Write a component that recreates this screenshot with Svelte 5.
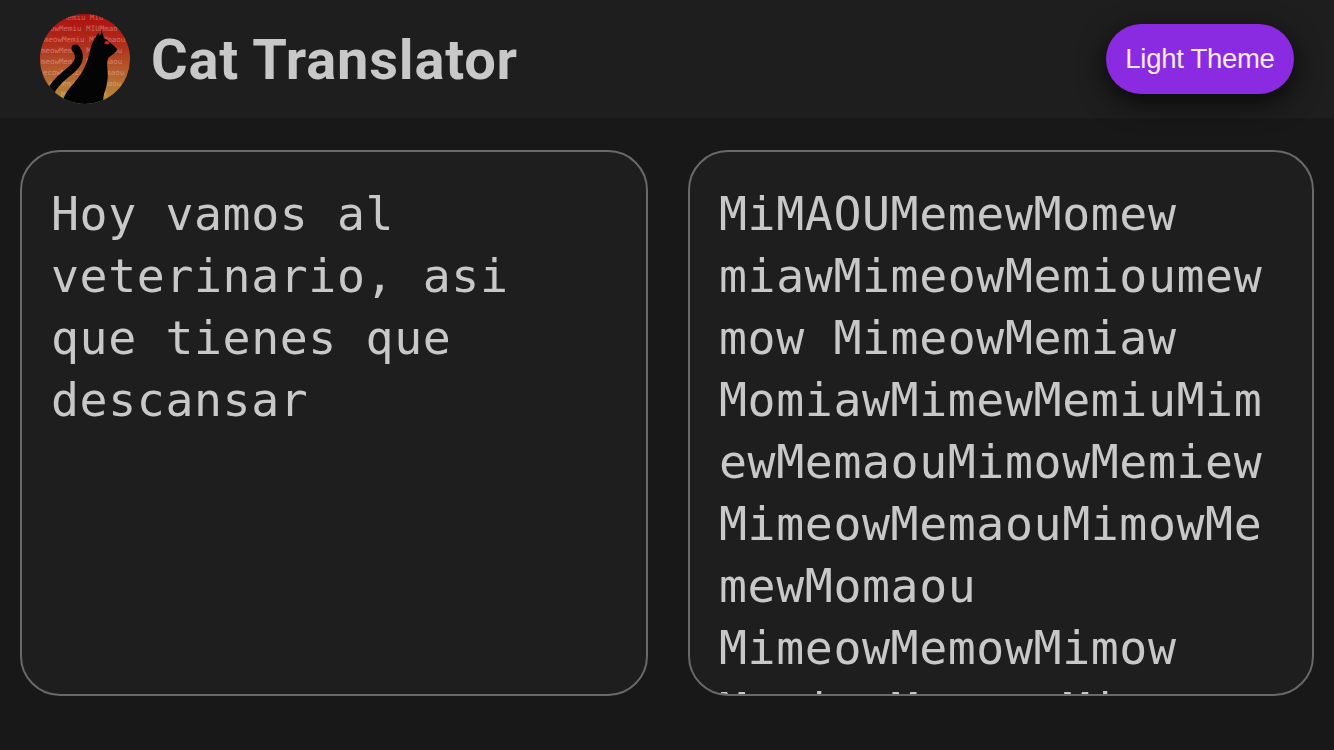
<script>
  let input = $state('Hoy vamos al veterinario, asi que tienes que descansar');
  const output = 'MiMAOUMemewMomew miawMimeowMemioumewmow MimeowMemiaw MomiawMimewMemiuMimewMemaouMimowMemiew MimeowMemaouMimowMemewMomaou MimeowMemowMimow MomiawMemaouMimow';
  const rows = [
    { x: 23, y: 6, t: 'Memiu MIU' },
    { x: 10, y: 17, t: 'owMemiu MIUMmao' },
    { x: 4, y: 28, t: 'meowMemiu MIUMmaou' },
    { x: 1, y: 39, t: 'meowMemiu MIUMmaou' },
    { x: 1, y: 50, t: 'meowMemiu MIUMmaou' },
    { x: 3, y: 61, t: 'ecowMemiu MIUMmaou' },
    { x: 9, y: 72, t: 'owMemiu MIUMmaou' },
    { x: 21, y: 83, t: 'Memiu MIUM' }
  ];
</script>

<div class="page">
  <header class="header">
    <div class="brand">
      <svg class="logo" viewBox="0 0 90 90" role="img" aria-label="Cat Translator logo">
        <defs>
          <linearGradient id="sunset" x1="0" y1="0" x2="0" y2="1">
            <stop offset="0" stop-color="#ae0f0f" />
            <stop offset="0.35" stop-color="#b02f1c" />
            <stop offset="0.65" stop-color="#b5602f" />
            <stop offset="1" stop-color="#b5933f" />
          </linearGradient>
          <clipPath id="disc"><circle cx="45" cy="45" r="45" /></clipPath>
        </defs>
        <g clip-path="url(#disc)">
          <rect width="90" height="90" fill="url(#sunset)" />
          {#each rows as row}
            <text x={row.x} y={row.y} class="logo-text">{row.t}</text>
          {/each}
          <path fill="#050404" d="M22 90 C23 84 26 78 30 73.7 C35 68 39 63 41.7 58.7 C45 53 47 48 48.3 43.7 C50 37 51 31 53.3 27 L58.3 18.7 L60 22 L61.7 16.3 L64 24 C68 26 72 30 77.3 35.3 C76 39 72 41 68.3 43.7 C67 47 67 50 67.3 53.7 C68 60 68 64 67.3 67 C66.5 74 64 79 63.3 83.7 L63 90 Z" />
          <path fill="none" stroke="#050404" stroke-width="8" stroke-linecap="butt" d="M10.5 78 C14 70 20 65 26 60 C31 56 37 52 38.5 46 C39.5 42 38.5 38 36 35" />
          <circle cx="35.5" cy="34.5" r="4" fill="#050404" />
          <ellipse cx="67" cy="28.7" rx="2.6" ry="1.7" fill="#e01a12" />
        </g>
      </svg>
      <h1 class="title">Cat Translator</h1>
    </div>
    <button class="theme" type="button">Light Theme</button>
  </header>
  <main class="panes">
    <div class="pane"><textarea class="field" bind:value={input} spellcheck="false"></textarea></div>
    <div class="pane"><textarea class="field" readonly value={output} spellcheck="false"></textarea></div>
  </main>
</div>

<style>
  :global(body) {
    margin: 0;
    background: #181818;
  }
  .page {
    height: 750px;
    display: flex;
    flex-direction: column;
    background: #181818;
    overflow: hidden;
  }
  .header {
    height: 119px;
    box-sizing: border-box;
    padding: 0 40px 1px;
    display: flex;
    align-items: center;
    justify-content: space-between;
    background: #1e1e1e;
    border-bottom: 1px solid #1a1a1a;
  }
  .brand {
    display: flex;
    align-items: center;
    gap: 21px;
  }
  .logo {
    width: 90px;
    height: 90px;
    display: block;
  }
  .logo-text {
    font-family: "DejaVu Sans Mono", monospace;
    font-size: 7.5px;
    fill: rgba(255, 215, 205, 0.42);
  }
  .title {
    margin: 3px 0 0;
    font-family: "Roboto", "Open Sans", sans-serif;
    font-size: 56px;
    font-weight: 700;
    letter-spacing: 0.8px;
    color: #c8c8c8;
    line-height: 1;
  }
  .theme {
    width: 188px;
    height: 70px;
    border: 0;
    border-radius: 35px;
    background: #8a2be2;
    color: #f4ecfd;
    font-family: "Liberation Sans", Arial, sans-serif;
    font-size: 27.5px;
    letter-spacing: -0.28px;
    box-shadow: 0 8px 28px rgba(0, 0, 0, 0.75);
    padding: 0;
  }
  .panes {
    flex: 1;
    display: grid;
    grid-template-columns: 628fr 626fr;
    gap: 40px;
    padding: 31px 20px 54px;
    box-sizing: border-box;
    min-height: 0;
  }
  .pane {
    min-width: 0;
    box-sizing: border-box;
    height: 546px;
    border: 2px solid #696969;
    border-radius: 40px;
    background: #1e1e1e;
    overflow: hidden;
  }
  .field {
    display: block;
    width: 100%;
    height: 100%;
    box-sizing: border-box;
    margin: 0;
    padding: 31px 30px 29px 29px;
    border: 0;
    background: transparent;
    color: #c8c8c8;
    font-family: "DejaVu Sans Mono", monospace;
    font-size: 46.5px;
    letter-spacing: 0.6px;
    line-height: 62px;
    overflow: hidden;
    resize: none;
    outline: none;
    will-change: transform;
  }
</style>
